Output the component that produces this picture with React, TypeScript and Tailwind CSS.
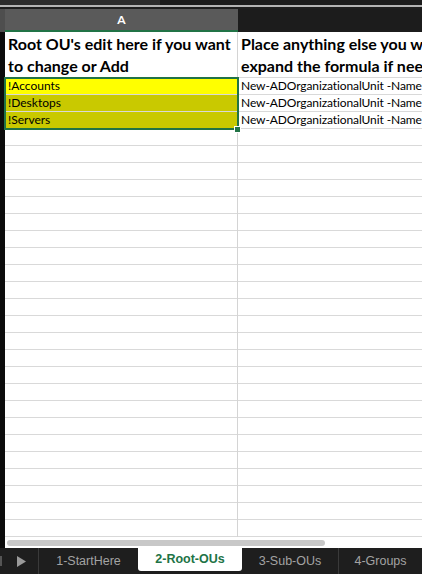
import React from "react";

const emptyRows = Array.from({ length: 24 }, (_, i) => i);

const tabs = [
  { label: "1-StartHere", w: "w-[99px]" },
  { label: "2-Root-OUs", w: "w-[104px]", active: true },
  { label: "3-Sub-OUs", w: "w-[97px]" },
  { label: "4-Groups", w: "flex-1" },
];

const Cell = ({ children, className = "" }: { children?: React.ReactNode; className?: string }) => (
  <div className={`h-[17px] border-b border-[#d9d9d9] flex items-center overflow-hidden whitespace-nowrap ${className}`}>
    {children}
  </div>
);

export default function App() {
  return (
    <div className="w-[422px] h-[574px] flex flex-col bg-white overflow-hidden font-['Lato',sans-serif]">
      {/* window chrome strip */}
      <div className="h-[5px] flex">
        <div className="w-[160px] bg-[#2c2c2c]" />
        <div className="flex-1 bg-[#1c1c1c]" />
      </div>
      <div className="h-[2px] bg-[#b4b4b4]" />
      <div className="h-[2px] bg-[#1e1e1e]" />

      {/* column headers */}
      <div className="h-[23px] flex">
        <div className="w-[5px] shrink-0 bg-[#4e4e4e]" />
        <div className="w-[233px] shrink-0 bg-[#5a5a5a] border-b-2 border-[#217346] flex items-center justify-center text-white text-[12px] font-bold">
          A
        </div>
        <div className="flex-1 bg-[#1c1c1c]" />
      </div>

      {/* grid */}
      <div className="flex-1 flex min-h-0">
        <div className="w-[5px] shrink-0 bg-[#0c0c0c]" />
        <div className="flex-1 min-w-0 flex flex-col relative">
          <div className="flex">
            <div className="w-[233px] shrink-0 border-r border-[#d4d4d4]">
              <div className="h-[46px] border-b border-[#d9d9d9] px-[3px] pt-[1px] text-[16px] leading-[22px] font-bold text-black whitespace-nowrap overflow-hidden">
                <div>Root OU's edit here if you want</div>
                <div>to change or Add</div>
              </div>
              <Cell className="bg-[#ffff00] px-[3px] text-[12px] text-black">!Accounts</Cell>
              <Cell className="bg-[#c9c900] px-[3px] text-[12px] text-black border-[#c9c900]">!Desktops</Cell>
              <Cell className="bg-[#c9c900] px-[3px] text-[12px] text-black">!Servers</Cell>
              {emptyRows.map((r) => (
                <Cell key={r} />
              ))}
            </div>
            <div className="flex-1 min-w-0">
              <div className="h-[46px] border-b border-[#d9d9d9] px-[3px] pt-[1px] text-[16px] leading-[22px] font-bold text-black whitespace-nowrap overflow-hidden">
                <div>Place anything else you want here</div>
                <div>expand the formula if needed</div>
              </div>
              {["a", "b", "c"].map((k) => (
                <Cell key={k} className="px-[3px] text-[12px] tracking-[-0.1px] text-black">
                  New-ADOrganizationalUnit -Name
                </Cell>
              ))}
              {emptyRows.map((r) => (
                <Cell key={r} />
              ))}
            </div>
          </div>

          {/* horizontal scrollbar */}
          <div className="flex-1 flex items-center pl-[2px]">
            <div className="w-[318px] h-[6px] rounded-full bg-[#c8c8c8]" />
          </div>

          {/* selection A2:A4 */}
          <div className="absolute left-[-1px] top-[45px] w-[235px] h-[53px] border-2 border-[#217346] pointer-events-none" />
          <div className="absolute left-[229px] top-[94px] w-[5px] h-[5px] bg-[#217346] border border-white box-content" />
        </div>
      </div>

      {/* sheet tabs */}
      <div className="h-[26px] bg-[#1e1e1e] flex text-[12.5px] font-['Liberation_Sans',sans-serif]">
        <div className="w-[39px] shrink-0 flex items-center border-r border-[#3a3a3a]">
          <div className="w-[2px] h-[10px] bg-[#555]" />
          <svg width="9" height="11" viewBox="0 0 9 11" className="ml-[15px]">
            <path d="M0 0 L9 5.5 L0 11 Z" fill="#9a9a9a" />
          </svg>
        </div>
        {tabs.map((t, i) =>
          t.active ? (
            <div
              key={t.label}
              className={`${t.w} h-[23px] bg-white rounded-b-[3px] flex items-center justify-center font-bold text-[#217346]`}
            >
              {t.label}
            </div>
          ) : (
            <div
              key={t.label}
              className={`${t.w} flex items-center justify-center text-[#a3a3a3] ${i === 2 ? "border-r border-[#3a3a3a]" : ""}`}
            >
              {t.label}
            </div>
          )
        )}
      </div>
    </div>
  );
}
